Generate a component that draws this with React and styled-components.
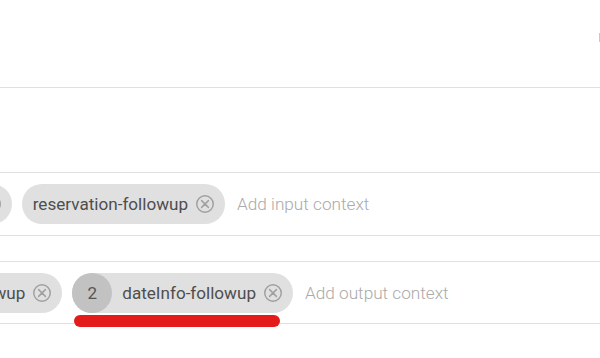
import React from 'react';
import styled, { createGlobalStyle } from 'styled-components';

const Global = createGlobalStyle`
  html, body { margin: 0; padding: 0; background: #fff; }
  body { font-family: Roboto, "Liberation Sans", sans-serif; overflow: hidden; }
`;

const Page = styled.div`
  width: 600px;
  height: 358px;
  overflow: hidden;
  display: flex;
  flex-direction: column;
`;

const Header = styled.div`
  height: 88px;
  border-bottom: 1px solid #e0e0e0;
  display: flex;
  justify-content: flex-end;
  align-items: flex-start;
  padding-top: 33px;
  box-sizing: border-box;
`;

const EdgeMark = styled.div`
  width: 1px;
  height: 9px;
  background: #c8c8c8;
`;

const Blank = styled.div`
  height: 84px;
  border-bottom: 1px solid #e0e0e0;
`;

const Row = styled.div`
  height: ${p => p.$h}px;
  border-bottom: 1px solid #e0e0e0;
  border-top: ${p => (p.$top ? '1px solid #e0e0e0' : 'none')};
  margin-top: ${p => p.$gap || 0}px;
  display: flex;
  align-items: center;
  overflow-x: clip;
  overflow-y: visible;
`;

const Track = styled.div`
  display: flex;
  align-items: center;
  gap: 10px;
  margin-left: ${p => p.$shift}px;
  flex-shrink: 0;
`;

const Chip = styled.div`
  position: relative;
  flex-shrink: 0;
  height: 40px;
  border-radius: 20px;
  background: #e0e0e0;
  display: flex;
  align-items: center;
  padding-left: ${p => (p.$avatar ? 0 : 11)}px;
  white-space: nowrap;
`;

const Avatar = styled.div`
  width: 40px;
  height: 40px;
  border-radius: 50%;
  background: #c2c2c2;
  color: #555;
  font-size: 17px;
  display: flex;
  align-items: center;
  justify-content: center;
  margin-right: 10px;
`;

const Label = styled.span`
  font-size: 17.1px;
  color: #4e4e4e;
`;

const Close = styled.svg`
  width: 22px;
  height: 22px;
  margin: 0 9px 0 6px;
  flex-shrink: 0;
`;

const Mark = styled.div`
  position: absolute;
  left: 2px;
  top: 42px;
  width: 206px;
  height: 12px;
  border-radius: 6px;
  background: #e31b1b;
`;

const Field = styled.input`
  border: none;
  outline: none;
  background: transparent;
  font-family: Roboto, "Liberation Sans", sans-serif;
  font-size: 17.2px;
  font-weight: 300;
  color: #444;
  width: 200px;
  padding: 0 0 0 2px;
  &::placeholder { color: #aaa; }
`;

const CloseIcon = () => (
  <Close viewBox="0 0 24 24">
    <circle cx="12" cy="12" r="9" fill="none" stroke="#a0a0a0" strokeWidth="1.6" />
    <path d="M8.3 8.3 L15.7 15.7 M15.7 8.3 L8.3 15.7" stroke="#a0a0a0" strokeWidth="1.6" strokeLinecap="round" />
  </Close>
);

const ContextChip = ({ label, count, marked }) => (
  <Chip $avatar={count != null}>
    {count != null && <Avatar>{count}</Avatar>}
    <Label>{label}</Label>
    <CloseIcon />
    {marked && <Mark />}
  </Chip>
);

export default function App() {
  return (
    <Page>
      <Global />
      <Header>
        <EdgeMark />
      </Header>
      <Blank />
      <Row $h={62}>
        <Track $shift={-170}>
          <ContextChip label="dateInfo-followup" />
          <ContextChip label="reservation-followup" />
          <Field placeholder="Add input context" />
        </Track>
      </Row>
      <Row $h={61} $top $gap={25}>
        <Track $shift={-141}>
          <ContextChip label="reservation-followup" />
          <ContextChip label="dateInfo-followup" count={2} marked />
          <Field placeholder="Add output context" />
        </Track>
      </Row>
    </Page>
  );
}
